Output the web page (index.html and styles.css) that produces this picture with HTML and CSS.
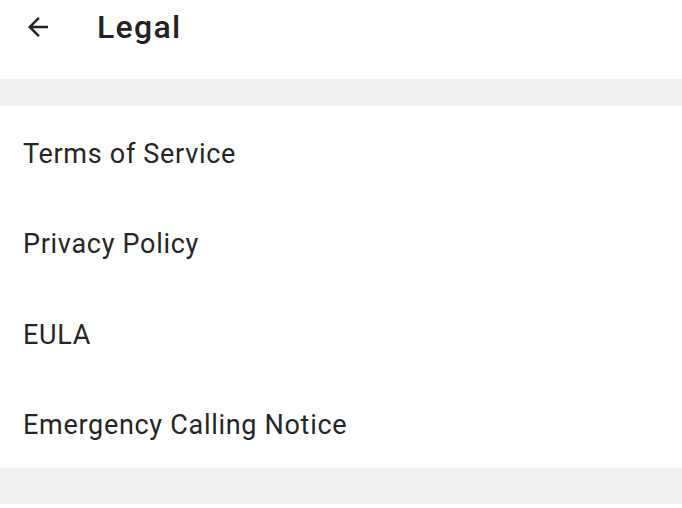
FILE: index.html
```html
<!DOCTYPE html>
<html>
<head>
<meta charset="utf-8">
<link rel="stylesheet" href="styles.css">
</head>
<body>
<div class="screen">
  <header class="topbar">
    <svg class="back" viewBox="0 0 24 24" width="30" height="30"><path d="M20 11H7.83l5.59-5.59L12 4l-8 8 8 8 1.41-1.41L7.83 13H20v-2z" fill="#222"/></svg>
    <h1 class="title">Legal</h1>
  </header>
  <div class="band"></div>
  <ul class="list">
    <li class="item">Terms of Service</li>
    <li class="item">Privacy Policy</li>
    <li class="item">EULA</li>
    <li class="item">Emergency Calling Notice</li>
  </ul>
  <div class="band bottom"></div>
</div>
</body>
</html>
```
FILE: styles.css
```css
html, body {
  margin: 0;
  padding: 0;
  background: #fff;
}
.screen {
  width: 682px;
  height: 508px;
  overflow: hidden;
  font-family: Roboto, "Liberation Sans", sans-serif;
  color: #222;
}
.topbar {
  height: 79px;
  display: flex;
  align-items: center;
  padding-left: 23px;
  box-sizing: border-box;
  padding-bottom: 25px;
}
.back {
  display: block;
  flex: none;
}
.title {
  margin: 0 0 0 44px;
  font-size: 32px;
  font-weight: 500;
  letter-spacing: 1.3px;
  color: #222;
  line-height: 1;
}
.band {
  height: 27px;
  background: #f0f0f2;
}
.band.bottom {
  height: 36px;
}
.list {
  list-style: none;
  margin: 0;
  padding: 0;
}
.item {
  height: 90.5px;
  box-sizing: border-box;
  padding-top: 5px;
  display: flex;
  align-items: center;
  padding-left: 23px;
  font-size: 27px;
  letter-spacing: 0.7px;
  color: #262626;
}
```
